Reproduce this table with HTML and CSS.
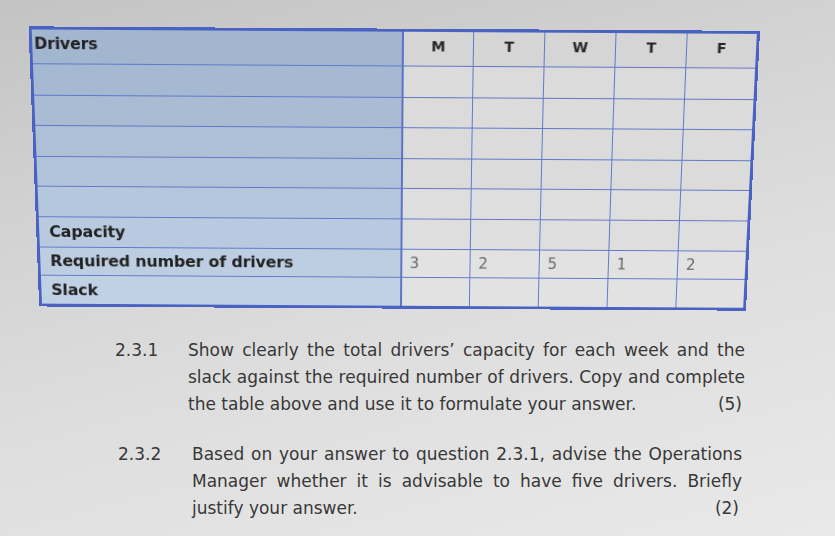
FILE: index.html
```html
<!DOCTYPE html>
<html lang="en">
<head>
<meta charset="utf-8">
<title>Drivers capacity</title>
<link rel="stylesheet" href="styles.css">
</head>
<body>
<div class="page">
  <table class="grid">
    <colgroup>
      <col class="c-label">
      <col class="c-day"><col class="c-day"><col class="c-day"><col class="c-day"><col class="c-day">
    </colgroup>
    <tr class="head">
      <th class="label">Drivers</th><th>M</th><th>T</th><th>W</th><th>T</th><th>F</th>
    </tr>
    <tr class="r1"><td class="label"></td><td></td><td></td><td></td><td></td><td></td></tr>
    <tr class="r2"><td class="label"></td><td></td><td></td><td></td><td></td><td></td></tr>
    <tr class="r3"><td class="label"></td><td></td><td></td><td></td><td></td><td></td></tr>
    <tr class="r4"><td class="label"></td><td></td><td></td><td></td><td></td><td></td></tr>
    <tr class="r5"><td class="label"></td><td></td><td></td><td></td><td></td><td></td></tr>
    <tr class="r6"><td class="label">Capacity</td><td></td><td></td><td></td><td></td><td></td></tr>
    <tr class="r7"><td class="label">Required number of drivers</td><td class="n">3</td><td class="n">2</td><td class="n">5</td><td class="n">1</td><td class="n">2</td></tr>
    <tr class="r8"><td class="label">Slack</td><td></td><td></td><td></td><td></td><td></td></tr>
  </table>

  <section class="questions">
    <div class="q q1">
      <span class="num">2.3.1</span>
      <div class="body">
        <div class="ln">Show clearly the total drivers’ capacity for each week and the</div>
        <div class="ln">slack against the required number of drivers. Copy and complete</div>
        <div class="ln last"><span>the table above and use it to formulate your answer.</span><span class="mark">(5)</span></div>
      </div>
    </div>
    <div class="q q2">
      <span class="num">2.3.2</span>
      <div class="body">
        <div class="ln">Based on your answer to question 2.3.1, advise the Operations</div>
        <div class="ln">Manager whether it is advisable to have five drivers. Briefly</div>
        <div class="ln last"><span>justify your answer.</span><span class="mark">(2)</span></div>
      </div>
    </div>
  </section>
</div>
</body>
</html>
```

FILE: styles.css
```css
html, body {
  margin: 0;
  padding: 0;
}
body {
  width: 835px;
  height: 536px;
  overflow: hidden;
  background: linear-gradient(165deg, #c3c3c3 0%, #d2d2d2 30%, #dedede 60%, #e9e9e9 100%);
  font-family: "DejaVu Sans", Verdana, sans-serif;
}
.page {
  padding: 30px 0 0 34px;
}

/* table */
.grid {
  width: 717px;
  border-collapse: collapse;
  table-layout: fixed;
  border: 3px solid #4a62c2;
  transform: perspective(1000px) rotateX(-7deg) rotate(0.35deg);
  transform-origin: 50% 50%;
}
.c-label { width: 366px; }
.c-day { width: 70px; }
.grid th, .grid td {
  border: 1.5px solid #6079c9;
  padding: 0 0 0 10px;
  height: 29px;
  background: #dbdbdb;
  color: #222;
  text-align: left;
  vertical-align: middle;
}
.grid .head th {
  height: 33px;
  line-height: 28px;
  font-size: 14px;
  font-weight: bold;
  text-align: center;
  vertical-align: top;
  padding: 0;
  color: #262626;
  background: #d5d5d5;
  letter-spacing: -0.3px;
}
.grid .head th.label {
  text-align: left;
  padding-left: 2px;
  font-size: 15.5px;
  line-height: 29px;
}
.grid .r1 td, .grid .r2 td, .grid .r3 td, .grid .r4 td, .grid .r5 td { height: 29.5px; }
.grid td.label, .grid th.label {
  background: #a2b6d0;
  border-right: 2px solid #5a74c6;
  font-size: 16px;
  font-weight: bold;
  letter-spacing: -0.15px;
  color: #222;
}
.grid .r1 .label { background: #a6b9d2; }
.grid .r2 .label { background: #a9bcd4; }
.grid .r3 .label { background: #adc0d7; }
.grid .r4 .label { background: #b1c3da; }
.grid .r5 .label { background: #b5c7dd; }
.grid .r6 .label { background: #b9cae0; }
.grid .r7 .label { background: #bdcee3; }
.grid .r8 .label { background: #c1d1e5; }
.grid .r6 td { height: 30px; }
.grid .r7 td, .grid .r8 td { height: 28.5px; }
.grid .r5 td:not(.label), .grid .r6 td:not(.label) { background: #dedede; }
.grid .r7 td:not(.label), .grid .r8 td:not(.label) { background: #e2e2e2; }
.grid td.n {
  font-size: 15px;
  color: #666;
  padding-left: 8px;
}

/* questions */
.questions {
  margin-top: 25px;
  color: #383838;
  font-size: 17px;
  line-height: 27px;
}
.q {
  display: flex;
}
.q1 { margin-left: 81px; width: 630px; }
.q2 { margin-left: 84px; width: 624px; margin-top: 23px; }
.num {
  width: 73px;
  flex: none;
}
.q2 .num { width: 74px; }
.body {
  flex: 1;
}
.ln {
  text-align: justify;
  text-align-last: justify;
  white-space: nowrap;
}
.ln.last {
  display: flex;
  justify-content: space-between;
  text-align: left;
}
.mark {
  padding-right: 3px;
}
```
